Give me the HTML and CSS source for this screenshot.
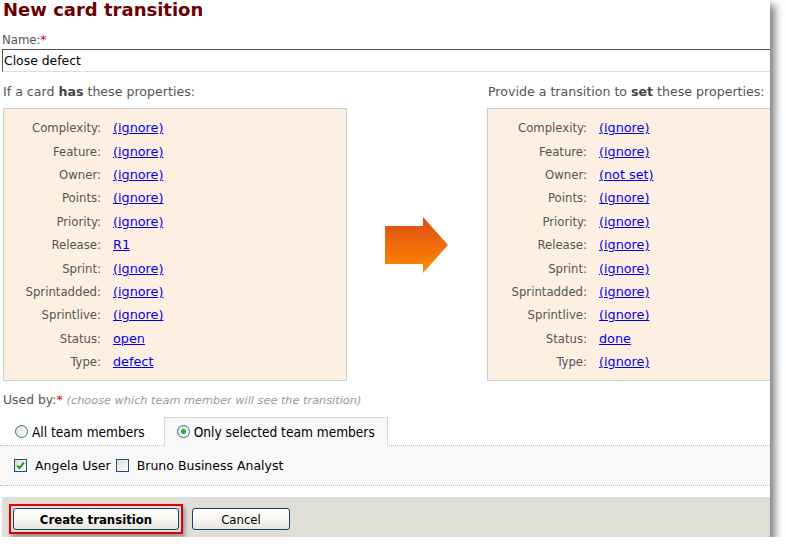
FILE: index.html
```html
<!DOCTYPE html>
<html>
<head>
<meta charset="utf-8">
<title>New card transition</title>
<link rel="stylesheet" href="styles.css">
</head>
<body>
<div class="panel">
  <h1 class="title">New card transition</h1>
  <div class="field-label">Name:<span class="req">*</span></div>
  <input class="name-input" type="text" value="Close defect">

  <div class="compare">
    <div class="caption">If a card <b>has</b> these properties:</div>
    <div class="caption caption-right">Provide a transition to <b>set</b> these properties:</div>

    <div class="props props-has">
      <div class="row"><span class="lbl">Complexity:</span><a href="#">(ignore)</a></div>
      <div class="row"><span class="lbl">Feature:</span><a href="#">(ignore)</a></div>
      <div class="row"><span class="lbl">Owner:</span><a href="#">(ignore)</a></div>
      <div class="row"><span class="lbl">Points:</span><a href="#">(ignore)</a></div>
      <div class="row"><span class="lbl">Priority:</span><a href="#">(ignore)</a></div>
      <div class="row"><span class="lbl">Release:</span><a href="#">R1</a></div>
      <div class="row"><span class="lbl">Sprint:</span><a href="#">(ignore)</a></div>
      <div class="row"><span class="lbl">Sprintadded:</span><a href="#">(ignore)</a></div>
      <div class="row"><span class="lbl">Sprintlive:</span><a href="#">(ignore)</a></div>
      <div class="row"><span class="lbl">Status:</span><a href="#">open</a></div>
      <div class="row"><span class="lbl">Type:</span><a href="#">defect</a></div>
    </div>

    <div class="arrow">
      <svg width="64" height="56" viewBox="0 0 64 56">
        <defs>
          <linearGradient id="ag" x1="0" y1="0" x2="0" y2="1">
            <stop offset="0" stop-color="#dc4a14"/>
            <stop offset="1" stop-color="#ff8c00"/>
          </linearGradient>
        </defs>
        <polygon points="0,9 38,9 38,0 63,28 38,56 38,47 0,47" fill="url(#ag)"/>
      </svg>
    </div>

    <div class="props props-set">
      <div class="row"><span class="lbl">Complexity:</span><a href="#">(ignore)</a></div>
      <div class="row"><span class="lbl">Feature:</span><a href="#">(ignore)</a></div>
      <div class="row"><span class="lbl">Owner:</span><a href="#">(not set)</a></div>
      <div class="row"><span class="lbl">Points:</span><a href="#">(ignore)</a></div>
      <div class="row"><span class="lbl">Priority:</span><a href="#">(ignore)</a></div>
      <div class="row"><span class="lbl">Release:</span><a href="#">(ignore)</a></div>
      <div class="row"><span class="lbl">Sprint:</span><a href="#">(ignore)</a></div>
      <div class="row"><span class="lbl">Sprintadded:</span><a href="#">(ignore)</a></div>
      <div class="row"><span class="lbl">Sprintlive:</span><a href="#">(ignore)</a></div>
      <div class="row"><span class="lbl">Status:</span><a href="#">done</a></div>
      <div class="row"><span class="lbl">Type:</span><a href="#">(ignore)</a></div>
    </div>
  </div>

  <div class="used-by">Used by:<span class="req">*</span> <span class="hint">(choose which team member will see the transition)</span></div>

  <div class="tabs">
    <div class="tab"><span class="radio"></span>All team members</div>
    <div class="tab tab-active"><span class="radio radio-on"></span>Only selected team members</div>
  </div>
  <div class="members">
    <span class="check check-on">
      <svg width="11" height="11" viewBox="0 0 11 11"><path d="M2 5.5 L4.5 8 L9 2.5" fill="none" stroke="#21a121" stroke-width="2"/></svg>
    </span>
    <span class="member">Angela User</span>
    <span class="check"></span>
    <span class="member">Bruno Business Analyst</span>
  </div>

  <div class="button-bar">
    <span class="highlight"><button class="btn btn-primary">Create transition</button></span>
    <button class="btn btn-cancel">Cancel</button>
  </div>
</div>
</body>
</html>
```

FILE: styles.css
```css
html, body {
  margin: 0;
  padding: 0;
  background: #ffffff;
}

body {
  font-family: "DejaVu Sans Condensed", "DejaVu Sans", Verdana, sans-serif;
  font-stretch: semi-condensed;
  font-size: 13px;
  color: #555555;
}

.panel {
  width: 768px;
  padding-left: 2px;
  background: #ffffff;
  overflow: hidden;
  box-shadow: 5px 5px 8px rgba(0, 0, 0, 0.5);
}

.title {
  margin: 0 0 0 1px;
  font-family: "DejaVu Sans", Verdana, sans-serif;
  font-stretch: normal;
  font-size: 18px;
  line-height: 20px;
  font-weight: bold;
  color: #6b0000;
}

.field-label {
  margin-top: 12px;
  line-height: 16px;
}

.req {
  color: #cc0000;
}

.name-input {
  display: block;
  box-sizing: border-box;
  margin: 1px 0 0 0;
  width: 790px;
  height: 23px;
  padding: 0 0 0 1px;
  border: none;
  border-top: 1px solid #555555;
  border-left: 1px solid #555555;
  border-bottom: 1px solid #dddddd;
  font-family: "DejaVu Sans", Verdana, sans-serif;
  font-stretch: normal;
  font-size: 12.4px;
  color: #000000;
  background: #ffffff;
  outline: none;
}

.compare {
  display: grid;
  grid-template-columns: 344px 140px 320px;
  grid-template-rows: auto auto;
  row-gap: 8px;
  margin-top: 12px;
  margin-left: 1px;
}

.caption {
  font-family: "DejaVu Sans", Verdana, sans-serif;
  font-stretch: normal;
  font-size: 12.6px;
  line-height: 16px;
  white-space: nowrap;
}

.caption b {
  color: #444444;
}

.caption-right {
  grid-column: 3;
  padding-left: 1px;
}

.props {
  box-sizing: border-box;
  border: 1px solid #cccccc;
  background: #fdf0e3;
  padding: 7px 0;
}

.props-has {
  grid-column: 1;
  grid-row: 2;
}

.props-set {
  grid-column: 3;
  grid-row: 2;
}

.arrow {
  grid-column: 2;
  grid-row: 2;
  display: flex;
  align-items: center;
  justify-content: center;
}

.arrow svg {
  display: block;
}

.row {
  display: flex;
  align-items: center;
  height: 23.4px;
  white-space: nowrap;
}

.lbl {
  display: inline-block;
  text-align: right;
}

.props-has .lbl {
  width: 97px;
}

.props-set .lbl {
  width: 99px;
}

.row a {
  margin-left: 12px;
  font-family: "DejaVu Sans", Verdana, sans-serif;
  font-stretch: normal;
  font-size: 12.8px;
  color: #0000ee;
  text-decoration: underline;
}

.used-by {
  margin-top: 11px;
  line-height: 16px;
  margin-left: 1px;
  font-family: "DejaVu Sans", Verdana, sans-serif;
  font-stretch: normal;
  font-size: 12.4px;
}

.hint {
  font-size: 11.3px;
  font-style: italic;
  color: #999999;
}

.tabs {
  display: flex;
  margin-top: 8px;
  height: 28px;
  position: relative;
  z-index: 1;
}

.tab {
  display: flex;
  align-items: center;
  box-sizing: border-box;
  height: 29px;
  padding: 0 12px 0 13px;
  font-size: 13.6px;
  color: #000000;
  white-space: nowrap;
}

.tab-active {
  margin-left: 7px;
  padding: 0 12px 0 12px;
  border: 1px dotted #bbbbbb;
  border-bottom: 1px solid #f8f8f8;
  background: #f8f8f8;
}

.radio {
  box-sizing: border-box;
  width: 13px;
  height: 13px;
  margin-right: 4px;
  border: 1px solid #3c6a94;
  border-radius: 50%;
  background: linear-gradient(135deg, #dcdcd6 0%, #ffffff 100%);
  display: inline-flex;
  align-items: center;
  justify-content: center;
}

.radio-on::after {
  content: "";
  width: 5px;
  height: 5px;
  border-radius: 50%;
  background: #2fa82f;
}

.members {
  box-sizing: border-box;
  height: 41px;
  margin-left: -2px;
  padding-left: 14px;
  border-top: 1px dotted #bbbbbb;
  border-bottom: 1px dotted #bbbbbb;
  background: #f8f8f8;
  display: flex;
  align-items: center;
  color: #000000;
  white-space: nowrap;
}

.check {
  box-sizing: border-box;
  width: 13px;
  height: 13px;
  border: 1px solid #1c5180;
  background: linear-gradient(135deg, #dcdcd6 0%, #ffffff 100%);
  display: inline-flex;
  align-items: center;
  justify-content: center;
}

.check svg {
  display: block;
}

.member {
  margin: 0 5px 0 8px;
  font-family: "DejaVu Sans", Verdana, sans-serif;
  font-stretch: normal;
  font-size: 12.5px;
}

.button-bar {
  margin-top: 11px;
  height: 40px;
  box-sizing: border-box;
  padding: 7px 0 0 7px;
  background: #e0dfd7;
  display: flex;
  align-items: flex-start;
}

.highlight {
  display: inline-block;
  border: 2px solid #e00000;
  padding: 2px;
  box-shadow: 2px 3px 4px rgba(0, 0, 0, 0.35);
}

.btn {
  display: block;
  box-sizing: border-box;
  height: 22px;
  padding: 0;
  border: 1px solid #1c3f6e;
  border-radius: 3px;
  background: linear-gradient(#ffffff 0%, #f4f3ee 60%, #e6e5de 100%);
  font-family: inherit;
  font-stretch: inherit;
  font-size: 13px;
  color: #000000;
}

.btn-primary {
  width: 166px;
  font-weight: bold;
}

.btn-cancel {
  width: 98px;
  margin: 4px 0 0 9px;
}
```
